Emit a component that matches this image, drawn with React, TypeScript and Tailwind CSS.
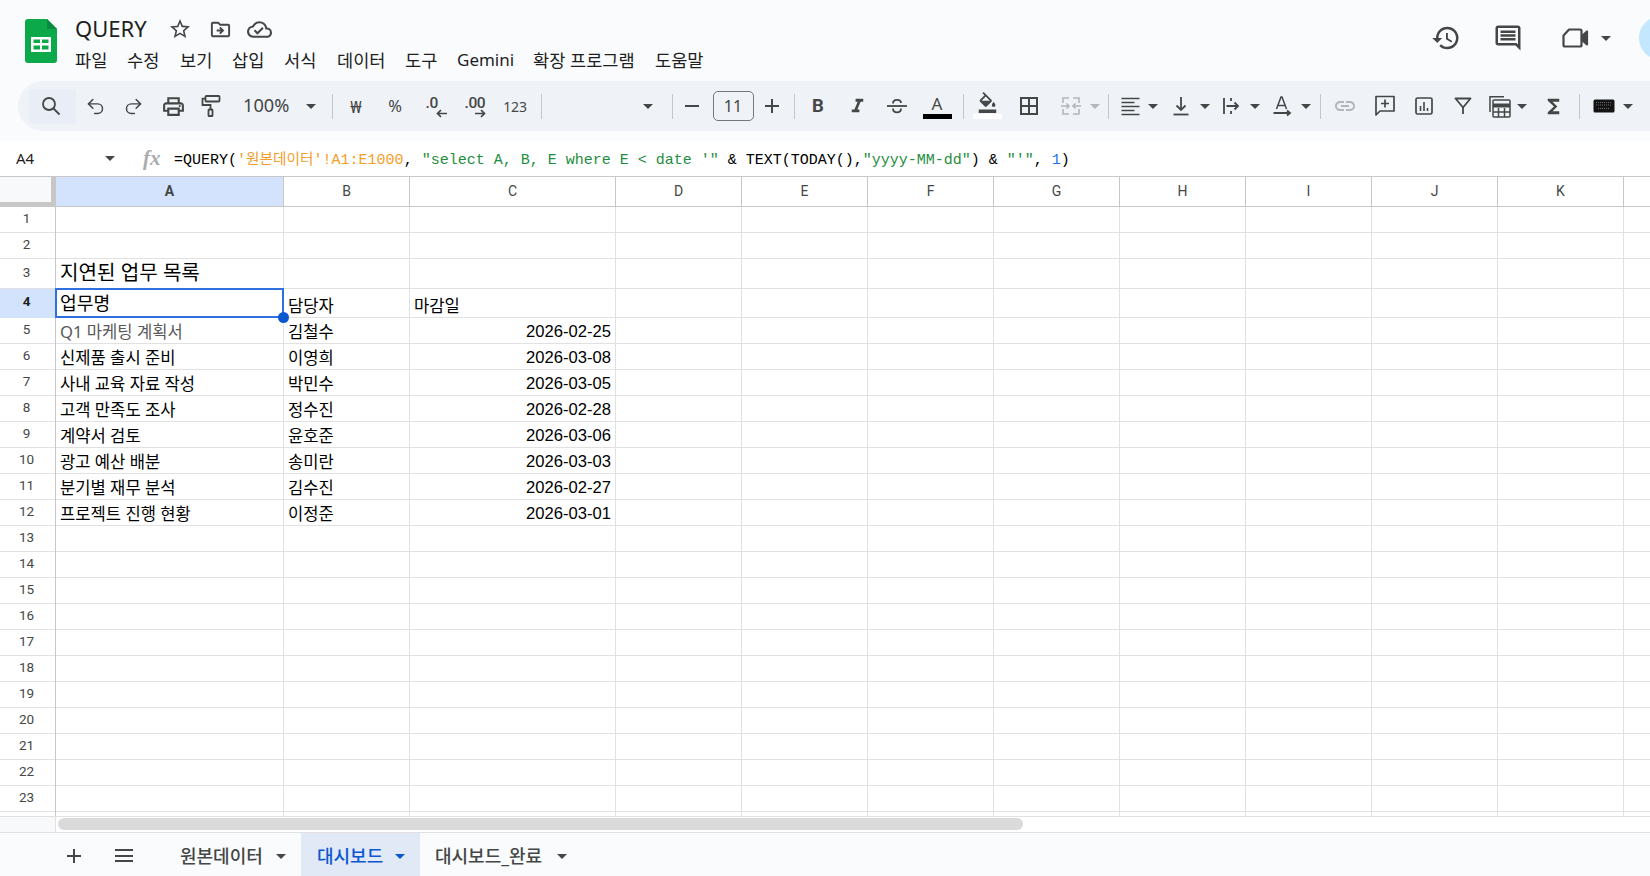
import type { ReactNode } from 'react'
import { Redo2, Undo2 } from 'lucide-react'
import {
  MdBorderAll,
  MdFormatItalic,
  MdFormatColorFill,
  MdFunctions,
  MdHistory,
  MdInsertLink,
  MdOutlineCloudDone,
  MdOutlineComment,
  MdOutlineDriveFileMove,
  MdOutlinePrint,
  MdStarBorder,
} from 'react-icons/md'

const sans = "font-['Noto_Sans','Noto_Sans_CJK_KR',sans-serif]"
const ink = '#444746'

const menus: [string, string][] = [
  ['파일', 'w-[52px] text-[17.600px]'],
  ['수정', 'w-[53px] text-[17.600px]'],
  ['보기', 'w-[52px] text-[17.600px]'],
  ['삽입', 'w-[52px] text-[17.600px]'],
  ['서식', 'w-[53px] text-[17.600px]'],
  ['데이터', 'w-[68px] text-[17.600px]'],
  ['도구', 'w-[52px] text-[17.600px]'],
  ['Gemini', 'w-[76px] text-[17px]'],
  ['확장 프로그램', 'w-[122px] text-[17.600px]'],
  ['도움말', 'w-[60px] text-[17.600px]'],
]

const columns = ['D', 'E', 'F', 'G', 'H', 'I', 'J', 'K']

const rows: { a?: string; b?: string; c?: string; h?: string; kind?: string }[] = [
  {},
  {},
  { a: '지연된 업무 목록', h: 'h-[30px]', kind: 'title' },
  { a: '업무명', b: '담당자', c: '마감일', h: 'h-[29px]', kind: 'head' },
  { a: 'Q1 마케팅 계획서', b: '김철수', c: '2026-02-25', kind: 'muted' },
  { a: '신제품 출시 준비', b: '이영희', c: '2026-03-08' },
  { a: '사내 교육 자료 작성', b: '박민수', c: '2026-03-05' },
  { a: '고객 만족도 조사', b: '정수진', c: '2026-02-28' },
  { a: '계약서 검토', b: '윤호준', c: '2026-03-06' },
  { a: '광고 예산 배분', b: '송미란', c: '2026-03-03' },
  { a: '분기별 재무 분석', b: '김수진', c: '2026-02-27' },
  { a: '프로젝트 진행 현황', b: '이정준', c: '2026-03-01' },
  ...Array.from({ length: 11 }, () => ({})),
]

function Caret({ light, blue }: { light?: boolean; blue?: boolean }) {
  const color = blue
    ? 'border-t-[#0b57d0]'
    : light
      ? 'border-t-[#b4b6b8]'
      : 'border-t-[#444746]'
  return (
    <span
      className={`inline-block h-0 w-0 border-x-[5px] border-t-[5px] border-x-transparent ${color}`}
    />
  )
}

function Slot({ w, children, left }: { w: string; children?: ReactNode; left?: boolean }) {
  return (
    <div className={`flex h-full shrink-0 items-center ${left ? 'justify-start' : 'justify-center'} ${w}`}>
      {children}
    </div>
  )
}

function Sep({ w }: { w: string }) {
  return (
    <Slot w={w}>
      <span className="h-[25px] w-px bg-[#c7c7c7]" />
    </Slot>
  )
}

function SheetsLogo() {
  return (
    <svg width="32" height="44" viewBox="0 0 32 44" className="shrink-0">
      <path
        d="M3 0h19l10 10v31a3 3 0 0 1-3 3H3a3 3 0 0 1-3-3V3a3 3 0 0 1 3-3z"
        fill="#0ca94b"
      />
      <path d="M22 0l10 10H22z" fill="#0a8a3e" />
      <path
        d="M6 18h20v15H6zM8.500 20.500v3.500h6.500v-3.500zM17 20.500v3.500h6.500v-3.500zM8.500 26.500v4h6.500v-4zM17 26.500v4h6.500v-4z"
        fill="#fff"
        fillRule="evenodd"
      />
    </svg>
  )
}

function MeetIcon() {
  return (
    <svg width="28" height="24" viewBox="0 0 28 24" fill="none" stroke={ink} strokeWidth="2.200">
      <path d="M8 3.500h11a1.500 1.500 0 0 1 1.500 1.500v14a1.500 1.500 0 0 1-1.500 1.500H4A1.500 1.500 0 0 1 2.500 19V9.500z" strokeLinejoin="round" />
      <path d="M21 10l5-4.500v13L21 14z" fill={ink} strokeLinejoin="round" />
    </svg>
  )
}

function SearchIcon() {
  return (
    <svg width="20" height="20" viewBox="0 0 20 20" fill="none" stroke={ink} strokeWidth="1.800" className="-ml-[4px]">
      <circle cx="8" cy="8" r="6" />
      <path d="M12.500 12.500L18.500 18.500" />
    </svg>
  )
}

function RollerIcon() {
  return (
    <svg width="20" height="24" viewBox="0 0 20 24" fill="none" stroke={ink} strokeWidth="1.800">
      <rect x="4.500" y="2" width="14" height="5.500" rx="0.800" />
      <path d="M4.500 4.700H1.500V11h8v4.500" />
      <rect x="7.500" y="15.500" width="4" height="6.500" rx="0.600" />
    </svg>
  )
}

function DecimalIcon({ label, right }: { label: string; right?: boolean }) {
  return (
    <div className="relative h-[23px] w-[21px] font-['Roboto',sans-serif] text-[15.500px] leading-[16px] font-medium tracking-[-0.4px] text-[#444746]">
      <span className="absolute top-[0px] left-0">{label}</span>
      <svg
        width="11"
        height="9"
        viewBox="0 0 11 9"
        fill="none"
        stroke={ink}
        strokeWidth="1.700"
        className="absolute right-0 bottom-0"
      >
        {right ? <path d="M0 4.500h9.500M6 1l3.500 3.500L6 8" /> : <path d="M11 4.500H1.500M5 1L1.500 4.500 5 8" />}
      </svg>
    </div>
  )
}

function StrikeIcon() {
  return (
    <svg width="22" height="22" viewBox="0 0 22 22" fill="none" stroke={ink} strokeWidth="1.800">
      <path d="M1 11h20" />
      <path d="M7 8.500C7 6 8.800 4.800 11 4.800S15 6 15 8" />
      <path d="M7 13.500c0 2.500 1.800 3.800 4 3.800s4-1.300 4-3.800" />
    </svg>
  )
}

function MergeIcon() {
  return (
    <svg width="22" height="22" viewBox="0 0 22 22" fill="none" stroke="#b4b6b8" strokeWidth="1.600">
      <path d="M3 8V3h6M3 14v5h6M19 8V3h-6M19 14v5h-6M1 11h8M6.500 8.500L9 11l-2.500 2.500M21 11h-8M15.500 8.500L13 11l2.500 2.500" />
    </svg>
  )
}

function AlignIcon() {
  return (
    <svg width="19" height="19" viewBox="0 0 19 19" fill="none" stroke={ink} strokeWidth="1.500">
      <path d="M0.500 1.500h18M0.500 5.500h13M0.500 9.500h18M0.500 13.500h13M0.500 17.500h18" />
    </svg>
  )
}

function ValignIcon() {
  return (
    <svg width="18" height="20" viewBox="0 0 18 20" fill="none" stroke={ink} strokeWidth="1.800">
      <path d="M9 1v13M4.500 9.500L9 14l4.500-4.500" />
      <path d="M1.500 18.500h15" />
    </svg>
  )
}

function WrapIcon() {
  return (
    <svg width="22" height="22" viewBox="0 0 22 22" fill="none" stroke={ink} strokeWidth="1.800">
      <path d="M3 3v16M10 3v3M10 10v2M10 16v3M5.500 11H17M13.500 7.500L17 11l-3.500 3.500" />
    </svg>
  )
}

function RotateIcon() {
  return (
    <svg width="22" height="22" viewBox="0 0 22 22" fill="none" stroke={ink} strokeWidth="1.500">
      <path d="M4.500 14L9 2h1l4.500 12M6 10.500h7" />
      <path d="M1.500 18h16M15 15.500l3 2.500-3 2.500" strokeWidth="1.800" />
    </svg>
  )
}

function AddCommentIcon() {
  return (
    <svg width="20" height="22" viewBox="0 0 20 22" fill="none" stroke={ink} strokeWidth="1.700">
      <path d="M1 1.500h18V16H5l-4 4z" strokeLinejoin="round" />
      <path d="M10 4.500v8M6 8.500h8" />
    </svg>
  )
}

function ChartIcon() {
  return (
    <svg width="18" height="18" viewBox="0 0 18 18" fill="none" stroke={ink}>
      <rect x="1" y="1" width="16" height="16" rx="1.500" strokeWidth="1.700" />
      <path d="M5.500 9v5M9 5v9M12.500 11v3" strokeWidth="1.600" />
    </svg>
  )
}

function FilterIcon() {
  return (
    <svg width="18" height="20" viewBox="0 0 18 20" fill="none" stroke={ink} strokeWidth="1.800">
      <path d="M1.500 2.500h15L9 11.500z" strokeLinejoin="round" />
      <path d="M9 11.500V18" />
    </svg>
  )
}

function TableIcon() {
  return (
    <svg width="24" height="24" viewBox="0 0 24 24" fill="none" stroke={ink} strokeWidth="1.500">
      <path d="M2 18V2.800h14" />
      <rect x="5" y="6" width="17" height="17" rx="1" />
      <path d="M5 11.500h17" strokeWidth="4" />
      <path d="M5 18h17M10.500 14v9M16.500 14v9" />
    </svg>
  )
}

function KeyboardIcon() {
  return (
    <svg width="22" height="14" viewBox="0 0 22 14" className="-ml-[2px]">
      <rect x="0.500" y="0.500" width="21" height="13" rx="1.500" fill="#141414" />
      <path d="M3 3.500h16M3 6h16M5 9.500h12" stroke="#6b6b6b" strokeWidth="1" strokeDasharray="1 1" />
    </svg>
  )
}

function TopBar() {
  return (
    <div className="flex h-[81px] shrink-0 items-start pt-[19px] pl-[25px]">
      <SheetsLogo />
      <div className="ml-[18px] flex flex-col">
        <div className="flex h-[20px] items-center text-[#1f1f1f]">
          <span className={`${sans} -mt-[3px] w-[91px] text-[22px] leading-[20px]`}>QUERY</span>
          <span className="flex w-[28px] justify-center">
            <MdStarBorder size={24} color={ink} />
          </span>
          <span className="ml-[12px] flex w-[28px] justify-center">
            <MdOutlineDriveFileMove size={23} color={ink} />
          </span>
          <span className="ml-[11px] flex w-[28px] justify-center">
            <MdOutlineCloudDone size={25} color={ink} />
          </span>
        </div>
        <div className="mt-[9px] flex h-[24px] items-center">
          {menus.map(([label, cls]) => (
            <span key={label} className={`${sans} shrink-0 leading-[24px] text-[#1f1f1f] ${cls}`}>
              {label}
            </span>
          ))}
        </div>
      </div>
      <div className="flex-1" />
      <div className="-mr-[33px] flex h-[38px] items-center">
        <MdHistory size={30} color={ink} />
        <span className="ml-[32px]">
          <MdOutlineComment size={30} color={ink} />
        </span>
        <span className="ml-[38px]">
          <MeetIcon />
        </span>
        <span className="ml-[12px] flex">
          <Caret />
        </span>
        <span className="mt-[0px] ml-[28px] h-[44px] w-[44px] rounded-full bg-[#c2e7ff]" />
      </div>
    </div>
  )
}

function Toolbar() {
  return (
    <div className="h-[60px] shrink-0 pb-[10px] pl-[18px]">
      <div className="flex h-[50px] items-center rounded-l-[25px] bg-[#eff3f8] pl-[11px] text-[#444746]">
        <div className="flex h-[35px] w-[47px] shrink-0 items-center justify-center rounded-l-[4px] bg-[#e8edf6]">
          <SearchIcon />
        </div>
        <Slot w="w-[38px]"><Undo2 size={21} strokeWidth={1.7} /></Slot>
        <Slot w="w-[39px]"><Redo2 size={21} strokeWidth={1.7} /></Slot>
        <Slot w="w-[40px]"><MdOutlinePrint size={25} /></Slot>
        <Slot w="w-[36px]"><RollerIcon /></Slot>
        <div className={`${sans} flex h-full w-[77px] shrink-0 items-center pl-[14px] text-[18.200px]`}>100%</div>
        <Slot w="w-[19px]" left><Caret /></Slot>
        <Sep w="w-[15px]" />
        <Slot w="w-[32px]"><span className="pt-[1px] font-['Noto_Sans',sans-serif] text-[17px]">₩</span></Slot>
        <Slot w="w-[46px]"><span className={`${sans} pt-[1px] text-[16.500px]`}>%</span></Slot>
        <Slot w="w-[36px]"><DecimalIcon label=".0" /></Slot>
        <Slot w="w-[42px]"><DecimalIcon label=".00" right /></Slot>
        <Slot w="w-[38px]"><span className={`${sans} text-[14px] tracking-[-0.2px]`}>123</span></Slot>
        <Sep w="w-[14px]" />
        <div className="flex h-full w-[117px] shrink-0 items-center justify-end pr-[12px]"><Caret /></div>
        <Sep w="w-[15px]" />
        <Slot w="w-[24px]"><span className="h-[2px] w-[14px] bg-[#444746]" /></Slot>
        <div className={`${sans} ml-[8.500px] flex h-[30px] w-[41px] shrink-0 items-center justify-center rounded-[5px] border border-[#747775] text-[16px]`}>
          11
        </div>
        <Slot w="w-[37px]">
          <span className="relative h-[14px] w-[14px]">
            <span className="absolute top-[6px] left-0 h-[2px] w-[14px] bg-[#444746]" />
            <span className="absolute top-0 left-[6px] h-[14px] w-[2px] bg-[#444746]" />
          </span>
        </Slot>
        <Sep w="w-[7px]" />
        <Slot w="w-[41px]"><span className="pt-[2px] font-['Roboto',sans-serif] text-[18.500px] font-bold">B</span></Slot>
        <Slot w="w-[38px]"><MdFormatItalic size={23} /></Slot>
        <Slot w="w-[40px]"><StrikeIcon /></Slot>
        <Slot w="w-[41px]">
          <div className="flex w-[29px] flex-col items-center">
            <span className={`${sans} text-[17px] leading-[19px]`}>A</span>
            <span className="mt-[1px] h-[5px] w-[29px] bg-black" />
          </div>
        </Slot>
        <Sep w="w-[11px]" />
        <Slot w="w-[38px]">
          <div className="flex w-[29px] flex-col items-center">
            <MdFormatColorFill size={21} className="-mt-[2px]" />
            <span className="mt-[1px] h-[5px] w-[29px] bg-white" />
          </div>
        </Slot>
        <Slot w="w-[45px]"><MdBorderAll size={24} /></Slot>
        <Slot w="w-[38px]"><MergeIcon /></Slot>
        <Slot w="w-[14px]" left><Caret light /></Slot>
        <Sep w="w-[10px]" />
        <Slot w="w-[34px]"><AlignIcon /></Slot>
        <Slot w="w-[14px]" left><Caret /></Slot>
        <Slot w="w-[38px]"><ValignIcon /></Slot>
        <Slot w="w-[14px]" left><Caret /></Slot>
        <Slot w="w-[36px]"><WrapIcon /></Slot>
        <Slot w="w-[16px]" left><Caret /></Slot>
        <Slot w="w-[35px]"><RotateIcon /></Slot>
        <Slot w="w-[16px]" left><Caret /></Slot>
        <Sep w="w-[8px]" />
        <Slot w="w-[40px]"><MdInsertLink size={24} color="#b4b6b8" /></Slot>
        <Slot w="w-[40px]"><AddCommentIcon /></Slot>
        <Slot w="w-[38px]"><ChartIcon /></Slot>
        <Slot w="w-[40px]"><FilterIcon /></Slot>
        <Slot w="w-[34px]"><TableIcon /></Slot>
        <Slot w="w-[18px]" left><Caret /></Slot>
        <Slot w="w-[38px]"><MdFunctions size={23} /></Slot>
        <Sep w="w-[14px]" />
        <Slot w="w-[36px]"><KeyboardIcon /></Slot>
        <Slot w="w-[18px]" left><Caret /></Slot>
      </div>
    </div>
  )
}

function FormulaBar() {
  return (
    <div className="flex h-[36px] shrink-0 items-center border-b border-[#c7c7c7] bg-white pl-[16px]">
      <span className={`${sans} w-[89px] text-[15px] text-[#1f1f1f]`}>A4</span>
      <Caret />
      <span className="ml-[28px] w-[31px] font-['Liberation_Serif',serif] text-[21px] font-bold text-[#a9abad] italic">
        fx
      </span>
      <div className="mt-[4px] font-['Liberation_Mono','Noto_Sans_CJK_KR',monospace] text-[15px] whitespace-pre text-black">
        =QUERY(
        <span className="text-[#f59e2c]">
          '<span className="text-[14.700px]">원본데이터</span>'!A1:E1000
        </span>
        , <span className="text-[#1e8e3e]">"select A, B, E where E &lt; date '"</span> &amp; TEXT(TODAY(),
        <span className="text-[#1e8e3e]">"yyyy-MM-dd"</span>) &amp; <span className="text-[#1e8e3e]">"'"</span>,{' '}
        <span className="text-[#1a73e8]">1</span>)
      </div>
    </div>
  )
}

function HeaderRow() {
  const label = "font-['Roboto',sans-serif] text-[14px] text-[#444746]"
  return (
    <div className="flex h-[30px] shrink-0 border-b border-[#c7c7c7]">
      <div className="h-[30px] w-[56px] shrink-0 border-r-[5px] border-b-[5px] border-[#c7c7c7] bg-[#f8f9fa]" />
      <div className={`${label} flex w-[228px] shrink-0 items-center justify-center border-r border-[#c7c7c7] bg-[#d3e3fd] font-bold`}>
        A
      </div>
      <div className={`${label} flex w-[126px] shrink-0 items-center justify-center border-r border-[#c7c7c7]`}>B</div>
      <div className={`${label} flex w-[206px] shrink-0 items-center justify-center border-r border-[#c7c7c7]`}>C</div>
      {columns.map((c) => (
        <div key={c} className={`${label} flex w-[126px] shrink-0 items-center justify-center border-r border-[#c7c7c7]`}>
          {c}
        </div>
      ))}
      <div className="flex-1" />
    </div>
  )
}

function DataRow({ index }: { index: number }) {
  const row = rows[index]
  const isHead = row.kind === 'head'
  const text = `${sans} px-[4px] whitespace-nowrap leading-[22px]`
  const aClass =
    row.kind === 'title'
      ? 'items-center pb-[2px] text-[20.100px] text-black'
      : isHead
        ? 'items-center text-[18.200px] text-black'
        : row.kind === 'muted'
          ? 'items-end text-[16.600px] text-[#595959]'
          : 'items-end text-[16.600px] text-black'
  return (
    <div className={`flex shrink-0 border-b border-[#e1e1e1] ${row.h ?? 'h-[26px]'}`}>
      <div
        className={`-mb-px flex w-[56px] shrink-0 items-center justify-center border-r border-[#c7c7c7] pr-[2px] pb-[4px] font-['Roboto',sans-serif] text-[13.500px] ${
          isHead ? 'bg-[#d3e3fd] font-bold text-[#1f1f1f]' : 'text-[#444746]'
        }`}
      >
        {index + 1}
      </div>
      <div className={`${text} relative flex w-[228px] shrink-0 border-r border-[#e1e1e1] ${aClass}`}>
        {row.a}
        {isHead && (
          <>
            <div className="absolute -top-px -left-px h-[calc(100%+2px)] w-[calc(100%+2px)] border-2 border-[#2f6fdf]" />
            <div className="absolute -right-[6px] -bottom-[6px] z-10 h-[11px] w-[11px] rounded-full bg-[#0b57d0]" />
          </>
        )}
      </div>
      <div className={`${text} flex w-[126px] shrink-0 items-end border-r border-[#e1e1e1] text-[16.600px] text-black`}>{row.b}</div>
      <div
        className={`${isHead ? text : "px-[4px] font-['Liberation_Sans',sans-serif] leading-[22px]"} flex w-[206px] shrink-0 items-end border-r border-[#e1e1e1] text-[16.600px] text-black ${
          isHead ? 'justify-start' : 'justify-end'
        }`}
      >
        {row.c}
      </div>
      {columns.map((c) => (
        <div key={c} className="w-[126px] shrink-0 border-r border-[#e1e1e1]" />
      ))}
      <div className="flex-1" />
    </div>
  )
}

function Grid() {
  return (
    <div className="h-[639px] shrink-0 overflow-hidden bg-white">
      <HeaderRow />
      {rows.map((_, i) => (
        <DataRow key={i} index={i} />
      ))}
      <div className="flex h-[10px] shrink-0">
        <div className="w-[56px] shrink-0 border-r border-[#c7c7c7]" />
        <div className="w-[228px] shrink-0 border-r border-[#e1e1e1]" />
        <div className="w-[126px] shrink-0 border-r border-[#e1e1e1]" />
        <div className="w-[206px] shrink-0 border-r border-[#e1e1e1]" />
        {columns.map((c) => (
          <div key={c} className="w-[126px] shrink-0 border-r border-[#e1e1e1]" />
        ))}
      </div>
    </div>
  )
}

function ScrollBar() {
  return (
    <div className="flex h-[17px] shrink-0 border-y border-[#e1e1e1] bg-white">
      <div className="w-[56px] shrink-0 border-r border-[#e1e1e1] bg-[#f8f9fa]" />
      <div className="mt-[1px] ml-[2px] h-[12px] w-[965px] rounded-[6px] bg-[#dadada]" />
    </div>
  )
}

function TabBar() {
  const tab = `${sans} text-[18px] font-medium`
  return (
    <div className="flex h-[43px] shrink-0 items-center bg-[#f9fbfd] text-[#444746]">
      <div className="flex h-full w-[150px] shrink-0 items-center pt-[2px] pl-[67px]">
        <span className="relative h-[14px] w-[14px]">
          <span className="absolute top-[6px] left-0 h-[2px] w-[14px] bg-[#444746]" />
          <span className="absolute top-0 left-[6px] h-[14px] w-[2px] bg-[#444746]" />
        </span>
        <span className="ml-[34px] flex h-[13px] w-[18px] flex-col justify-between">
          <span className="h-[2px] bg-[#444746]" />
          <span className="h-[2px] bg-[#444746]" />
          <span className="h-[2px] bg-[#444746]" />
        </span>
      </div>
      <div className="flex h-full w-[151px] shrink-0 items-center pt-[3px] pl-[30px]">
        <span className={`${tab} w-[96px]`}>원본데이터</span>
        <Caret />
      </div>
      <div className="flex h-full w-[119px] shrink-0 items-center bg-[#e1e9f7] pt-[3px] pl-[16px] text-[#0b57d0]">
        <span className={`${tab} w-[78px] font-bold`}>대시보드</span>
        <Caret blue />
      </div>
      <div className="flex h-full shrink-0 items-center pt-[3px] pl-[15px]">
        <span className={`${tab} w-[122px]`}>대시보드_완료</span>
        <Caret />
      </div>
    </div>
  )
}

export default function App() {
  return (
    <div className="flex h-[876px] w-[1650px] flex-col overflow-hidden bg-[#f9fbfd]">
      <TopBar />
      <Toolbar />
      <FormulaBar />
      <Grid />
      <ScrollBar />
      <TabBar />
    </div>
  )
}
